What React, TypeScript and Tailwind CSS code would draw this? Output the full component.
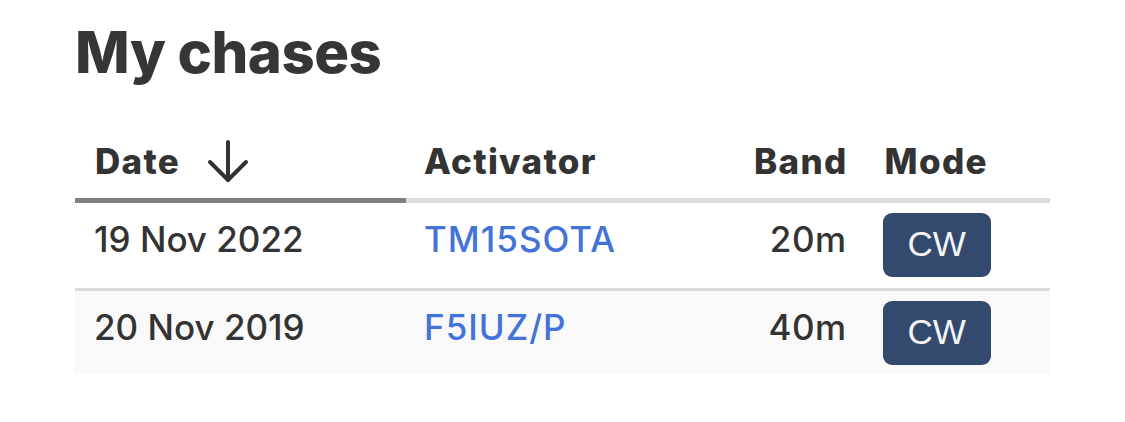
const chases = [
  { date: "19 Nov 2022", activator: "TM15SOTA", band: "20m", mode: "CW" },
  { date: "20 Nov 2019", activator: "F5IUZ/P", band: "40m", mode: "CW" },
]

function ArrowDown() {
  return (
    <svg width="44" height="44" viewBox="0 0 44 44" fill="none" stroke="#333333" strokeWidth="4" strokeLinecap="round" strokeLinejoin="round">
      <path d="M22 3v38" />
      <path d="M4 23l18 18 18-18" />
    </svg>
  )
}

export default function App() {
  return (
    <div className="min-h-[422px] bg-white pl-[75px] pr-[75px] pt-[17px] font-['Inter',sans-serif] text-[#333333]">
      <h1 className="text-[58px] font-extrabold leading-[70px] tracking-[-0.5px] text-[#363636]">My chases</h1>

      <table className="mt-[37px] w-[975px] border-collapse text-[35px] leading-[54px]">
        <thead>
          <tr className="tracking-[1.3px]">
            <th className="w-[331px] border-b-[5px] border-[#808080] px-[20px] py-[10px] text-left font-extrabold">
              <span className="flex items-center gap-[26px]">
                Date
                <ArrowDown />
              </span>
            </th>
            <th className="w-[329px] border-b-[5px] border-[#dbdbdb] px-[18px] py-[10px] text-left font-extrabold">Activator</th>
            <th className="w-[130px] border-b-[5px] border-[#dbdbdb] px-[19px] py-[10px] text-right font-extrabold">Band</th>
            <th className="border-b-[5px] border-[#dbdbdb] px-[18px] py-[10px] text-left font-extrabold">Mode</th>
          </tr>
        </thead>
        <tbody>
          {chases.map((c, i) => (
            <tr key={c.date} className={i % 2 === 1 ? "bg-[#f9f9f9]" : "bg-white"}>
              <td className={`px-[19px] pt-[9px] font-medium align-top ${i === 0 ? "border-b-[3px] border-[#dbdbdb]" : ""}`}>{c.date}</td>
              <td className={`px-[18px] pt-[9px] font-medium align-top ${i === 0 ? "border-b-[3px] border-[#dbdbdb]" : ""}`}>
                <a href="#" className="tracking-[1px] text-[#4373d9]">{c.activator}</a>
              </td>
              <td className={`px-[20px] pt-[9px] text-right font-medium tracking-[0.5px] align-top ${i === 0 ? "border-b-[3px] border-[#dbdbdb]" : ""}`}>{c.band}</td>
              <td className={`px-[16px] pt-[10px] align-top ${i === 0 ? "border-b-[3px] border-[#dbdbdb] pb-[11px]" : "pb-[9px]"}`}>
                <span className="flex h-[64px] w-[108px] items-center justify-center rounded-[9px] bg-[#334a6e] pb-[3px] font-['Liberation_Sans',sans-serif] text-[35px] leading-none text-[#f4f4f4]">
                  {c.mode}
                </span>
              </td>
            </tr>
          ))}
        </tbody>
      </table>
    </div>
  )
}
